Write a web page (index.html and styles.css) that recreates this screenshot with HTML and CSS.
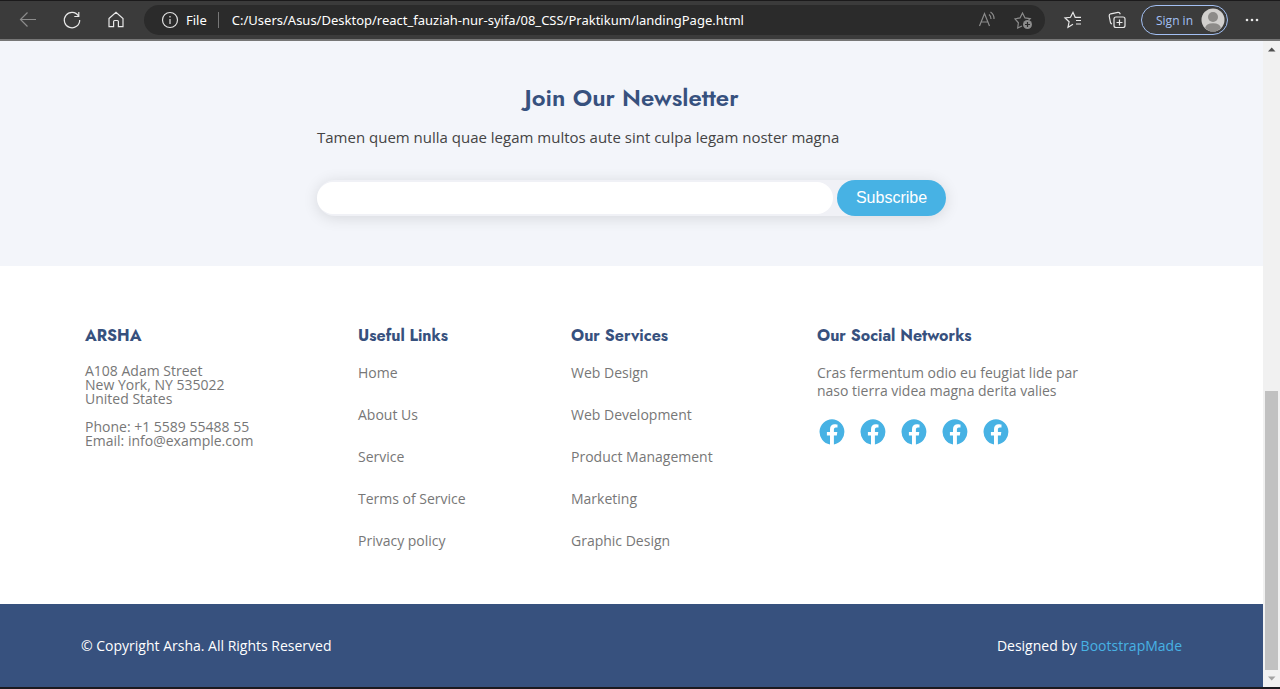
FILE: index.html
```html
<!DOCTYPE html>
<html lang="en">
<head>
<meta charset="utf-8">
<title>Arsha</title>
<link rel="stylesheet" href="styles.css">
</head>
<body>
<svg class="defs" aria-hidden="true">
  <symbol id="facebook" viewBox="0 0 26 26">
    <path fill="#47b2e4" d="M13 .3a12.700 12.700 0 0 0-2 25.200v-8.900H7.900V13H11v-2.800c0-3.100 1.900-4.900 4.700-4.900 1.400 0 2.800.3 2.800.3v3h-1.600c-1.500 0-2 1-2 2V13h3.400l-.5 3.600h-2.900v8.900A12.700 12.700 0 0 0 13 .3z"/>
  </symbol>
</svg>
<header class="toolbar">
  <nav class="nav-buttons" aria-label="Browser">
    <button class="icon-button dim" aria-label="Back"><svg viewBox="0 0 24 24"><path d="M20 11.500H4.500M11.500 4.500l-7 7 7 7"/></svg></button>
    <button class="icon-button" aria-label="Refresh"><svg viewBox="0 0 24 24"><path d="M18.500 8A7.700 7.700 0 1 0 19.700 12M18.800 4v4.500h-4.500"/></svg></button>
    <button class="icon-button" aria-label="Home"><svg viewBox="0 0 24 24"><path d="M5 10.500l7-6.200 7 6.200v8.200h-4.600v-5.200q0-1-1-1h-2.800q-1 0-1 1v5.200H5z"/></svg></button>
  </nav>
  <div class="address">
    <svg class="info" viewBox="0 0 24 24"><circle cx="12" cy="12" r="7.500"/><path d="M12 11v5M12 8v1.500"/></svg>
    <span class="scheme">File</span>
    <span class="url">C:/Users/Asus/Desktop/react_fauziah-nur-syifa/08_CSS/Praktikum/landingPage.html</span>
    <button class="icon-button dim" aria-label="Read aloud"><svg viewBox="0 0 24 24"><path d="M4.500 18L9.500 5.500 14.500 18M6.200 14h6.600M14 6.500q2.200 1.800 2 4.500M15.500 4q3.700 2.500 3.500 7"/></svg></button>
    <button class="icon-button dim" aria-label="Add to favorites"><svg viewBox="0 0 24 24"><path d="M11 18l-4.300 2 .7-5.200L4 10.800l5-.9L11.500 5 14 9.900l5.200.8-1.700 1.600"/><circle cx="16.500" cy="16.500" r="4.500" fill="currentColor" stroke="none"/><path class="cut" d="M16.500 14v5M14 16.500h5"/></svg></button>
  </div>
  <div class="tools">
    <button class="icon-button" aria-label="Favorites"><svg viewBox="0 0 24 24"><path d="M12 16.200l-5 3 1.100-5.400L4 10l5.500-.7L12 4.300l2.200 5H20M15 12.500h5M15 16h5"/></svg></button>
    <button class="icon-button" aria-label="Collections"><svg viewBox="0 0 24 24"><rect x="9" y="9" width="11" height="10.500" rx="2"/><path d="M14.500 11.500v6M11.500 14.500h6M7 16q-1.200-.4-1.500-1.500L4.200 8q-.2-1.600 1.500-2.200L13 4.400q1.700-.1 2.300 1.800"/></svg></button>
  </div>
  <button class="sign-in">Sign in
    <svg viewBox="0 0 24 24"><circle cx="12" cy="12" r="11.500" fill="#d2d0ce"/><circle cx="12" cy="9" r="5" fill="#8d8b89"/><path d="M4 20.300q1-5 8-5t8 5q-3.500 3.200-8 3.200t-8-3.200z" fill="#8d8b89"/></svg>
  </button>
  <button class="icon-button more" aria-label="Settings and more"><svg viewBox="0 0 24 24"><g fill="currentColor" stroke="none"><circle cx="7" cy="12" r="1.300"/><circle cx="12" cy="12" r="1.300"/><circle cx="17" cy="12" r="1.300"/></g></svg></button>
</header>
<div class="viewport">
  <main class="page">
    <section class="newsletter">
      <div class="newsletter-inner">
        <h2>Join Our Newsletter</h2>
        <p>Tamen quem nulla quae legam multos aute sint culpa legam noster magna</p>
        <form class="subscribe">
          <input type="email" aria-label="Email address">
          <button type="button">Subscribe</button>
        </form>
      </div>
    </section>
    <section class="links">
      <div class="column">
        <h3>ARSHA</h3>
        <address>A108 Adam Street<br>New York, NY 535022<br>United States<br><br>Phone: +1 5589 55488 55<br>Email: info@example.com</address>
      </div>
      <div class="column">
        <h3>Useful Links</h3>
        <ul>
          <li><a href="#">Home</a></li>
          <li><a href="#">About Us</a></li>
          <li><a href="#">Service</a></li>
          <li><a href="#">Terms of Service</a></li>
          <li><a href="#">Privacy policy</a></li>
        </ul>
      </div>
      <div class="column">
        <h3>Our Services</h3>
        <ul>
          <li><a href="#">Web Design</a></li>
          <li><a href="#">Web Development</a></li>
          <li><a href="#">Product Management</a></li>
          <li><a href="#">Marketing</a></li>
          <li><a href="#">Graphic Design</a></li>
        </ul>
      </div>
      <div class="column">
        <h3>Our Social Networks</h3>
        <p>Cras fermentum odio eu feugiat lide par naso tierra videa magna derita valies</p>
        <div class="social">
          <a href="#" aria-label="Facebook"><svg><use href="#facebook"/></svg></a>
          <a href="#" aria-label="Facebook"><svg><use href="#facebook"/></svg></a>
          <a href="#" aria-label="Facebook"><svg><use href="#facebook"/></svg></a>
          <a href="#" aria-label="Facebook"><svg><use href="#facebook"/></svg></a>
          <a href="#" aria-label="Facebook"><svg><use href="#facebook"/></svg></a>
        </div>
      </div>
    </section>
    <footer class="copyright">
      <span>© Copyright Arsha. All Rights Reserved</span>
      <span>Designed by <a href="#">BootstrapMade</a></span>
    </footer>
  </main>
  <div class="scrollbar" aria-hidden="true">
    <svg viewBox="0 0 17 17"><path d="M5 10.500h7.500L8.700 6.500z" fill="#505050"/></svg>
    <div class="thumb"></div>
    <svg viewBox="0 0 17 17"><path d="M5 6.500h7.500L8.700 10.500z" fill="#a3a3a3"/></svg>
  </div>
</div>
</body>
</html>
```
FILE: styles.css
```css
* {
  box-sizing: border-box;
}

body {
  margin: 0;
  min-height: 100vh;
  display: flex;
  flex-direction: column;
  border-bottom: 2px solid #1b1a1f;
  font-family: "Open Sans", sans-serif;
  font-size: 14px;
  color: #444;
  background: #fff;
}

h2, h3, p, ul {
  margin: 0;
  padding: 0;
}

a {
  color: inherit;
  text-decoration: none;
}

button {
  border: 0;
  padding: 0;
  background: none;
  font: inherit;
  color: inherit;
}

.defs {
  display: none;
}

.toolbar {
  display: flex;
  align-items: center;
  height: 41px;
  padding: 0 16px;
  background: #3b3b3b;
  border-top: 1px solid #1b1a1b;
  border-bottom: 2px solid #767676;
  color: #e8e8e8;
}

.nav-buttons {
  display: flex;
  gap: 20px;
}

.icon-button {
  width: 24px;
  height: 24px;
}

.icon-button svg,
.info {
  display: block;
  width: 24px;
  height: 24px;
  fill: none;
  stroke: currentColor;
  stroke-width: 1.2;
}

.dim {
  color: #8c8c8c;
}

.icon-button .cut {
  stroke: #2b2b2b;
}

.address {
  flex: 1;
  display: flex;
  align-items: center;
  height: 30px;
  margin: 0 16px;
  padding: 0 10px 0 14px;
  border-radius: 15px;
  background: #2b2b2b;
  font-family: "Noto Sans", sans-serif;
  font-size: 13px;
  color: #fff;
}

.scheme {
  margin-left: 4px;
  padding-right: 11px;
  border-right: 1px solid #777;
  line-height: 16px;
}

.url {
  flex: 1;
  padding-left: 13px;
  white-space: nowrap;
}

.address .icon-button {
  margin-left: 12px;
}

.info {
  color: #e0e0e0;
}

.tools {
  display: flex;
  gap: 20px;
  margin-right: 12px;
}

.sign-in {
  display: flex;
  align-items: center;
  justify-content: space-between;
  width: 87px;
  height: 30px;
  padding: 0 2px 0 14px;
  border: 1px solid #a3c0f3;
  border-radius: 15px;
  font-size: 12px;
  color: #a3c0f3;
}

.sign-in svg {
  width: 24px;
  height: 24px;
}

.more {
  margin-left: 12px;
}

.viewport {
  flex: 1;
  display: flex;
}

.page {
  flex: 1;
  display: flex;
  flex-direction: column;
}

.newsletter {
  padding: 40px 16px 50px;
  background: #f3f5fa;
}

.newsletter-inner {
  max-width: 629px;
  margin: 0 auto;
}

.newsletter h2 {
  margin-bottom: 12px;
  font-family: Jost, Lato, sans-serif;
  font-size: 24px;
  font-weight: 600;
  line-height: 34px;
  text-align: center;
  color: #37517e;
}

.newsletter p {
  margin-bottom: 32px;
  font-size: 15px;
  line-height: 21px;
}

.subscribe {
  display: flex;
  align-items: center;
  gap: 4px;
  height: 36px;
  border-radius: 50px;
  background: #f0f1f6;
  box-shadow: 0 2px 15px rgba(0, 0, 0, 0.12);
}

.subscribe input {
  flex: 1;
  min-width: 0;
  height: 32px;
  padding: 0 16px;
  border: 0;
  border-radius: 50px;
  background: #fff;
}

.subscribe button {
  width: 109px;
  height: 36px;
  border-radius: 50px;
  background: #47b2e4;
  font-family: "Liberation Sans", Arial, sans-serif;
  font-size: 16px;
  color: #fff;
}

.links {
  flex: 1;
  display: grid;
  grid-template-columns: 273fr 213fr 246fr 281fr;
  padding: 58px 165px 52px 85px;
  color: #777;
}

.links h3 {
  margin-bottom: 16px;
  font-family: Jost, Lato, sans-serif;
  font-size: 16px;
  font-weight: 700;
  line-height: 24px;
  color: #37517e;
}

.links address {
  font-style: normal;
  line-height: 14px;
}

.links ul {
  display: grid;
  gap: 24px;
  list-style: none;
  line-height: 18px;
}

.links p {
  max-width: 270px;
  line-height: 18px;
}

.social {
  display: flex;
  gap: 15px;
  margin-top: 19px;
  padding-left: 2px;
}

.social svg {
  display: block;
  width: 26px;
  height: 26px;
}

.copyright {
  display: flex;
  align-items: center;
  justify-content: space-between;
  height: 83px;
  padding: 0 81px;
  background: #37517e;
  color: #fff;
}

.copyright a {
  color: #47b2e4;
}

.scrollbar {
  display: flex;
  flex-direction: column;
  width: 17px;
  background: #f1f1f1;
}

.scrollbar svg {
  width: 17px;
  height: 17px;
}

.thumb {
  width: 13px;
  height: 279px;
  margin: auto 2px 0;
  background: #c1c1c1;
}
```
